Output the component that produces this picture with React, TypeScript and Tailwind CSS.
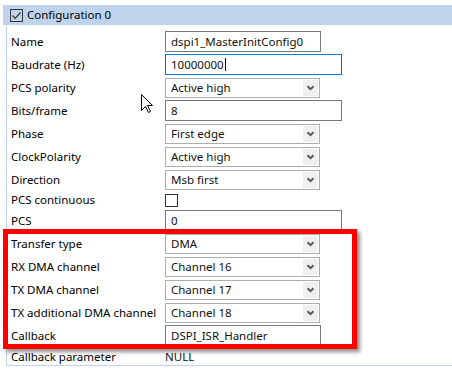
import React from 'react';

const font = { fontFamily: '"Noto Sans", "Segoe UI", sans-serif' };

function Chevron() {
  return (
    <svg width="9" height="6" viewBox="0 0 9 6">
      <path d="M1.5 1.2 L4.5 4.2 L7.5 1.2" fill="none" stroke="#5a5a5a" strokeWidth="2" />
    </svg>
  );
}

function Select({ value }: { value: string }) {
  return (
    <div className="flex h-[20px] w-[155px] items-stretch border border-[#adadad] bg-white">
      <span className="flex-1 pl-[5px] leading-[18px] text-[#111]">{value}</span>
      <span className="m-px flex w-[15px] items-center justify-center bg-[#efefef]">
        <Chevron />
      </span>
    </div>
  );
}

function TextBox({ value, wide, focused }: { value: string; wide?: boolean; focused?: boolean }) {
  return (
    <div
      className={`h-[21px] border pl-[5px] leading-[19px] text-[#111] ${wide ? 'w-[177px]' : 'w-[156px]'} ${
        focused ? 'border-[#0078d7]' : 'border-[#7a7a7a]'
      }`}
    >
      {value}
      {focused && <span className="ml-px inline-block h-[13px] w-px translate-y-[2px] bg-black" />}
    </div>
  );
}

type Row = { label: string; h?: string; control?: React.ReactNode };

const rows: Row[] = [
  { label: 'Name', control: <TextBox value="dspi1_MasterInitConfig0" /> },
  { label: 'Baudrate (Hz)', control: <TextBox value="10000000" wide focused /> },
  { label: 'PCS polarity', control: <Select value="Active high" /> },
  { label: 'Bits/frame', control: <TextBox value="8" wide /> },
  { label: 'Phase', control: <Select value="First edge" /> },
  { label: 'ClockPolarity', control: <Select value="Active high" /> },
  { label: 'Direction', control: <Select value="Msb first" /> },
  {
    label: 'PCS continuous',
    h: 'h-[18px]',
    control: <div className="h-[13px] w-[13px] border border-[#333] bg-white" />,
  },
  { label: 'PCS', control: <TextBox value="0" wide /> },
  { label: 'Transfer type', control: <Select value="DMA" /> },
  { label: 'RX DMA channel', control: <Select value="Channel 16" /> },
  { label: 'TX DMA channel', control: <Select value="Channel 17" /> },
  { label: 'TX additional DMA channel', control: <Select value="Channel 18" /> },
  { label: 'Callback', control: <TextBox value="DSPI_ISR_Handler" /> },
  { label: 'Callback parameter', h: 'h-[19px]', control: <span className="text-[#111]">NULL</span> },
];

export default function App() {
  return (
    <div className="relative h-[369px] w-[452px] overflow-hidden bg-white text-[11.5px] text-black" style={font}>
      <div className="ml-[3px] mt-[5px] flex h-[20px] items-center bg-[#bfd4ec] pl-[7px]">
        <div className="flex h-[13px] w-[13px] items-center justify-center border border-[#333]">
          <svg width="11" height="11" viewBox="0 0 11 11">
            <path d="M1.5 5.5 L4.2 8.3 L9.5 2.5" fill="none" stroke="#333" strokeWidth="1.2" />
          </svg>
        </div>
        <span className="ml-[4px]">Configuration 0</span>
      </div>

      <div className="ml-[6px] h-[341px] border-b border-l border-[#bfd4ec] pl-[4px] pt-[5px]">
        {rows.map((r) => (
          <div key={r.label} className={`flex items-center ${r.h ?? 'h-[23px]'}`}>
            <span className="w-[154px] shrink-0">{r.label}</span>
            {r.control}
          </div>
        ))}
      </div>

      {/* highlight box */}
      <div className="absolute left-[3px] top-[229px] h-[120px] w-[354px] border-[5px] border-[#ff0000] shadow-[3px_3px_4px_rgba(0,0,0,0.45)]" />

      {/* mouse pointer */}
      <svg className="absolute left-[141px] top-[94px]" width="13" height="20" viewBox="0 0 13 20">
        <path
          d="M0.5 0.5 L0.5 16.5 L4.5 12.5 L7.5 18.5 L9.5 17.5 L6.5 11.5 L11.5 11.5 Z"
          fill="#fff"
          stroke="#000"
          strokeWidth="1"
          strokeLinejoin="miter"
        />
      </svg>
    </div>
  );
}
